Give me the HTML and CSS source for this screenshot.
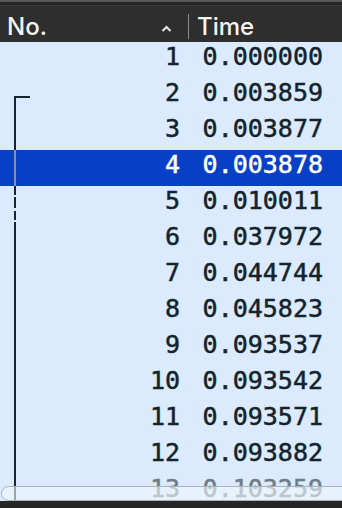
FILE: index.html
```html
<!DOCTYPE html>
<html lang="en">
<head>
    <meta charset="UTF-8">
    <meta name="viewport" content="width=device-width, initial-scale=1.0">
    <title>Packet list</title>
    <link rel="stylesheet" href="styles.css">
</head>
<body>
    <div id="wrap">
        <div class="head">
            <div class="col-no">No.
                <svg class="sort" width="11" height="7" viewBox="0 0 11 7"><path d="M1.5 6 L5.5 2 L9.5 6" fill="none" stroke="#e0e0e0" stroke-width="2.2"/></svg>
            </div>
            <div class="col-time">Time</div>
        </div>
        <div class="list">
            <div class="row"><span class="rel"></span><span class="no">1</span><span class="time">0.000000</span></div>
            <div class="row"><span class="rel start"></span><span class="no">2</span><span class="time">0.003859</span></div>
            <div class="row"><span class="rel line"></span><span class="no">3</span><span class="time">0.003877</span></div>
            <div class="row sel"><span class="rel line"></span><span class="no">4</span><span class="time">0.003878</span></div>
            <div class="row"><span class="rel dash"></span><span class="no">5</span><span class="time">0.010011</span></div>
            <div class="row"><span class="rel line"></span><span class="no">6</span><span class="time">0.037972</span></div>
            <div class="row"><span class="rel line"></span><span class="no">7</span><span class="time">0.044744</span></div>
            <div class="row"><span class="rel line"></span><span class="no">8</span><span class="time">0.045823</span></div>
            <div class="row"><span class="rel line"></span><span class="no">9</span><span class="time">0.093537</span></div>
            <div class="row"><span class="rel line"></span><span class="no">10</span><span class="time">0.093542</span></div>
            <div class="row"><span class="rel line"></span><span class="no">11</span><span class="time">0.093571</span></div>
            <div class="row"><span class="rel line"></span><span class="no">12</span><span class="time">0.093882</span></div>
            <div class="row faded"><span class="rel line"></span><span class="no">13</span><span class="time">0.103259</span></div>
            <div class="hscroll"></div>
        </div>
        <div class="foot"></div>
    </div>
</body>
</html>
```
FILE: styles.css
```css
body{
    margin: 0;
    padding: 0;
    background: #2b2b2b;
}
#wrap{
    width: 342px;
    height: 508px;
    overflow: hidden;
    display: flex;
    flex-direction: column;
}
.head{
    height: 32px;
    flex: none;
    display: flex;
    align-items: center;
    background: #2e2e2e;
    border-top: 2px solid #585858;
    box-shadow: inset 0 3px 0 #242424, inset 0 4px 0 #3a3a3a;
    padding-top: 8px;
    color: #f4f4f4;
    font-family: Inter, "Liberation Sans", sans-serif;
    font-size: 24px;
    font-weight: 500;
}
.col-no{
    width: 189px;
    box-sizing: border-box;
    padding-left: 7px;
    display: flex;
    align-items: center;
    justify-content: space-between;
    padding-right: 16px;
    border-right: 1px solid #8c8c8c;
    height: 25px;
    line-height: 25px;
}
.sort{
    margin-top: 4px;
}
.col-time{
    padding-left: 8px;
}
.list{
    flex: 1;
    position: relative;
    overflow: hidden;
    background: #dbebfd;
}
.row{
    display: flex;
    height: 36px;
    box-sizing: border-box;
    padding-bottom: 7px;
    line-height: 29px;
    font-family: "DejaVu Sans Mono", monospace;
    font-size: 25px;
    color: #13232c;
    -webkit-text-stroke: 0.5px #13232c;
}
.row.sel{
    background: #0740c7;
    color: #ffffff;
    -webkit-text-stroke-color: #ffffff;
}
.row.faded{
    color: #6f7c84;
    -webkit-text-stroke-color: #6f7c84;
}
.rel{
    flex: none;
    width: 16px;
    margin-left: 14px;
    height: 36px;
    box-sizing: border-box;
}
.rel.line{
    border-left: 2px solid #18262d;
}
.sel .rel.line{
    border-left-color: #8a8f99;
}
.rel.start{
    margin-top: 18px;
    height: 18px;
    border-left: 2px solid #18262d;
    border-top: 2px solid #18262d;
}
.rel.dash{
    width: 2px;
    margin-right: 14px;
    background: repeating-linear-gradient(to bottom, #18262d 0 9px, transparent 9px 11px, #18262d 11px 22px, transparent 22px 25px);
}
.no{
    width: 150px;
    text-align: right;
}
.time{
    width: 143px;
    text-align: right;
}
.hscroll{
    position: absolute;
    left: 1px;
    right: -10px;
    bottom: 0;
    height: 13px;
    border: 1px solid #a9b3bd;
    border-radius: 8px;
    background: rgba(240, 246, 252, 0.6);
}
.foot{
    height: 7px;
    flex: none;
    background: #262626;
}
```
